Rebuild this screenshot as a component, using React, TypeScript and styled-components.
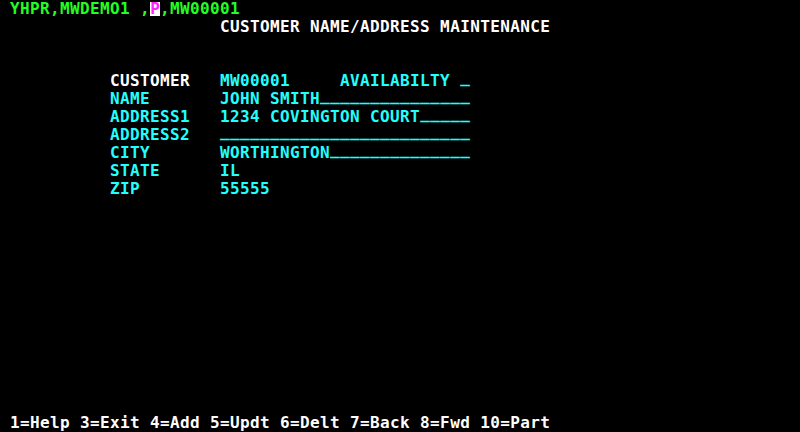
import React from 'react'
import styled, { createGlobalStyle } from 'styled-components'

const GlobalStyle = createGlobalStyle`
  html, body {
    margin: 0;
    padding: 0;
    background: #000;
  }
`

const colors: Record<string, string> = {
  green: '#22ff22',
  white: '#ffffff',
  cyan: '#22ffff',
  magenta: '#ff22ff',
}

const Screen = styled.div`
  width: 800px;
  height: 432px;
  background: #000;
  display: grid;
  grid-template-rows: repeat(24, 18px);
  font-family: "DejaVu Sans Mono", "Liberation Mono", monospace;
  font-size: 16px;
  font-weight: bold;
  letter-spacing: 0.37px;
  overflow: hidden;
`

const Row = styled.div`
  height: 18px;
  line-height: 18px;
  white-space: pre;
`

const Field = styled.span<{ $color: string }>`
  color: ${(p) => colors[p.$color]};
`

// field filler: the terminal draws its underscores higher than the font does
const Filler = styled.span`
  position: relative;
  top: -3px;
`

const Cursor = styled.span`
  display: inline-block;
  width: 10px;
  height: 14px;
  line-height: 14px;
  margin-top: 2px;
  vertical-align: top;
  letter-spacing: 0;
  text-align: center;
  background: #fff;
  color: ${colors.magenta};
`

const pad = (s: string, n: number) => s + ' '.repeat(Math.max(0, n - s.length))
const fill = (s: string, n: number) => '_'.repeat(Math.max(0, n - s.length))

const fields = [
  ['NAME', 'JOHN SMITH'],
  ['ADDRESS1', '1234 COVINGTON COURT'],
  ['ADDRESS2', ''],
  ['CITY', 'WORTHINGTON'],
]

const App = () => {
  return (
    <>
      <GlobalStyle />
      <Screen>
        <Row>
          <Field $color="green"> YHPR,MWDEMO1 ,</Field>
          <Cursor>P</Cursor>
          <Field $color="green">,MW00001</Field>
        </Row>
        <Row>
          <Field $color="white">{' '.repeat(22)}CUSTOMER NAME/ADDRESS MAINTENANCE</Field>
        </Row>
        <Row />
        <Row />
        <Row>
          <Field $color="white">{' '.repeat(11)}CUSTOMER   </Field>
          <Field $color="cyan">
            MW00001     AVAILABILTY <Filler>_</Filler>
          </Field>
        </Row>
        {fields.map(([label, value]) => (
          <Row key={label}>
            <Field $color="cyan">
              {' '.repeat(11) + pad(label, 11) + value}
              <Filler>{fill(value, 25)}</Filler>
            </Field>
          </Row>
        ))}
        <Row>
          <Field $color="cyan">{' '.repeat(11) + pad('STATE', 11)}IL</Field>
        </Row>
        <Row>
          <Field $color="cyan">{' '.repeat(11) + pad('ZIP', 11)}55555</Field>
        </Row>
        {Array.from({ length: 12 }).map((_, i) => (
          <Row key={'blank' + i} />
        ))}
        <Row>
          <Field $color="white"> 1=Help 3=Exit 4=Add 5=Updt 6=Delt 7=Back 8=Fwd 10=Part</Field>
        </Row>
      </Screen>
    </>
  )
}

export default App
